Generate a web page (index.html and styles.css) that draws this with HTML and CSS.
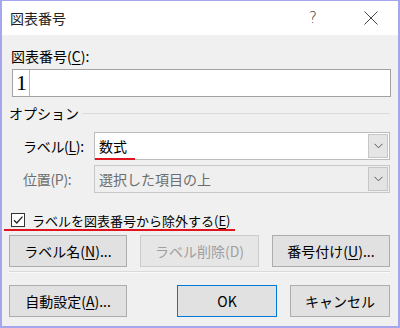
FILE: index.html
```html
<!DOCTYPE html>
<html lang="ja">

<head>
  <meta charset="UTF-8">
  <title>図表番号</title>
  <link rel="stylesheet" href="styles.css">
</head>

<body>
  <div class="dialog">
    <div class="titlebar">
      <span class="title">図表番号</span>
      <span class="help">?</span>
      <svg class="close" width="14" height="14" viewBox="0 0 14 14">
        <path d="M0.5 0.5 L13.5 13.5 M13.5 0.5 L0.5 13.5" stroke="#444" stroke-width="1" fill="none" />
      </svg>
    </div>

    <div class="content">
      <div class="field-label">図表番号(<u>C</u>):</div>
      <div class="caption-input"><span class="caption-num">1</span></div>

      <div class="group-title"><span>オプション</span></div>

      <div class="option-row">
        <span class="option-label">ラベル(<u>L</u>):</span>
        <div class="combo">
          <span class="combo-text marked">数式</span>
          <span class="combo-btn">
            <svg width="9" height="6" viewBox="0 0 9 6"><path d="M0.5 0.8 L4.5 4.8 L8.5 0.8" stroke="#555" fill="none" /></svg>
          </span>
        </div>
      </div>

      <div class="option-row disabled">
        <span class="option-label">位置(P):</span>
        <div class="combo">
          <span class="combo-text">選択した項目の上</span>
          <span class="combo-btn">
            <svg width="9" height="6" viewBox="0 0 9 6"><path d="M0.5 0.8 L4.5 4.8 L8.5 0.8" stroke="#555" fill="none" /></svg>
          </span>
        </div>
      </div>

      <div class="check-row">
        <span class="checkbox">
          <svg width="12" height="12" viewBox="0 0 12 12"><path d="M2 6.2 L4.8 9 L10.5 2.6" stroke="#222" stroke-width="1.3" fill="none" /></svg>
        </span>
        <span class="check-label">ラベルを図表番号から除外する(<u>E</u>)</span>
      </div>

      <div class="button-grid">
        <button class="btn">ラベル名(<u>N</u>)...</button>
        <button class="btn" disabled>ラベル削除(D)</button>
        <button class="btn">番号付け(<u>U</u>)...</button>
      </div>

      <div class="separator"></div>

      <div class="button-footer">
        <button class="btn auto">自動設定(<u>A</u>)...</button>
        <button class="btn ok">OK</button>
        <button class="btn cancel">キャンセル</button>
      </div>
    </div>
  </div>
</body>

</html>
```

FILE: styles.css
```css
* {
  margin: 0;
  padding: 0;
  box-sizing: border-box;
}

body {
  width: 400px;
  height: 328px;
  overflow: hidden;
  font-family: 'Noto Sans CJK JP', 'Noto Sans', sans-serif;
  font-size: 14px;
  color: #000;
  background: #f0f0f0;
}

u {
  text-decoration: underline;
  text-underline-offset: 2px;
}

.dialog {
  width: 400px;
  height: 328px;
  border: 2px solid #a6a6ee;
  border-top-width: 1px;
  background: #f0f0f0;
  display: flex;
  flex-direction: column;
}

.titlebar {
  height: 34px;
  background: #fff;
  display: flex;
  align-items: center;
  padding: 0 0 0 8px;
}

.title {
  font-size: 14px;
  color: #222;
  flex: 1;
}

.help {
  font-family: 'DejaVu Sans', sans-serif;
  font-size: 15px;
  font-weight: 300;
  color: #333;
  margin-right: 47px;
}

.close {
  margin-right: 20px;
}

.content {
  flex: 1;
  padding: 12px 8px 0 7px;
  position: relative;
}

.field-label {
  line-height: 18px;
  padding-left: 2px;
}

.caption-input {
  margin: 4px -1px 0 3px;
  height: 28px;
  background: #fff;
  border: 1px solid #a2a2a2;
  display: flex;
}

.caption-num {
  font-family: 'Liberation Serif', serif;
  font-size: 22px;
  line-height: 26px;
  padding: 0 2px 0 3px;
  border-right: 1px solid #b8b8b8;
}

.group-title {
  margin-top: 7px;
  line-height: 18px;
  display: flex;
  align-items: center;
  gap: 3px;
}

.group-title::after {
  content: '';
  flex: 1;
  height: 1px;
  background: #dcdcdc;
}

.option-row {
  display: flex;
  align-items: center;
  margin-top: 10px;
}

.option-row + .option-row {
  margin-top: 5px;
}

.option-label {
  width: 85px;
  padding-left: 14px;
  letter-spacing: -0.3px;
}

.combo {
  flex: 1;
  height: 28px;
  background: #fff;
  border: 1px solid #bcbcbc;
  display: flex;
  align-items: center;
  padding: 1px;
}

.combo-text {
  flex: 1;
  padding-left: 3px;
  position: relative;
}

.combo-btn {
  width: 20px;
  height: 24px;
  background: #e5e5e5;
  border: 1px solid #c6c6c6;
  display: flex;
  align-items: center;
  justify-content: center;
}

.marked::after {
  content: '';
  position: absolute;
  left: -1px;
  width: 40px;
  bottom: -4px;
  height: 2px;
  background: #e0141e;
}

.disabled .option-label,
.disabled .combo-text {
  color: #6d6d6d;
}

.disabled .combo {
  background: #efefef;
  border-color: #c8c8c8;
}

.disabled .combo-btn {
  background: #e3e3e3;
}

.check-row {
  margin-top: 19px;
  display: flex;
  align-items: center;
  height: 16px;
  position: relative;
}

.check-row::after {
  content: '';
  position: absolute;
  left: -5px;
  width: 231px;
  bottom: -3px;
  height: 2px;
  background: #e0141e;
}

.checkbox {
  width: 14px;
  height: 14px;
  margin-left: 2px;
  border: 1px solid #333;
  background: #fff;
  display: flex;
  align-items: center;
  justify-content: center;
}

.check-label {
  margin-left: 7px;
  font-size: 13px;
}

.btn {
  height: 32px;
  font-family: inherit;
  font-size: 14px;
  color: #000;
  background: #e1e1e1;
  border: 1px solid #adadad;
}

.btn:disabled {
  color: #a0a0a0;
  background: #e6e6e6;
  border-color: #cccccc;
}

.button-grid {
  margin-top: 7px;
  display: grid;
  grid-template-columns: 118px 119px 118px;
  justify-content: space-between;
}

.separator {
  margin-top: 4px;
  height: 1px;
  background: #dadada;
  border-bottom: 1px solid #fafafa;
  box-sizing: content-box;
}

.button-footer {
  margin-top: 12px;
  display: flex;
  gap: 13px;
}

.auto {
  width: 118px;
  margin-right: auto;
}

.ok {
  width: 100px;
  border-color: #0078d7;
}

.cancel {
  width: 100px;
}
```
